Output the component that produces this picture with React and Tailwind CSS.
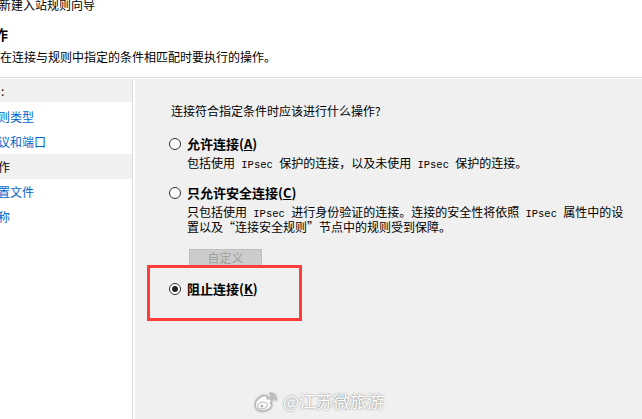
import React from 'react'

const cjk = "font-['Noto_Sans_CJK_SC','Noto_Sans',sans-serif]"

// 单选框
function Radio({ checked }) {
  return (
    <span className="w-[12px] h-[12px] rounded-full border border-[#333333] bg-white flex items-center justify-center shrink-0">
      {checked && <span className="w-[6px] h-[6px] rounded-full bg-[#222222]" />}
    </span>
  )
}

function Option({ label, hotkey, checked }) {
  return (
    <div className="flex items-center h-4 gap-[6px]">
      <Radio checked={checked} />
      <span className="text-[13px] leading-4 font-bold text-black">
        {label}(<span className="underline">{hotkey}</span>)
      </span>
    </div>
  )
}

// IPsec 等英文按等宽显示
function Mono({ children }) {
  return <span className="font-['Liberation_Mono',monospace] text-[10.5px] leading-none">{children}</span>
}

function WeiboLogo() {
  return (
    <svg width="26" height="21" viewBox="0 0 26 21" className="drop-shadow-[0_0_1px_rgba(0,0,0,0.45)]">
      <path d="M3 11c2-4 7-7 10-6 2 1 1 3 1 3s3-1 4 1c1 2-1 3-1 3 2 1 2 3 0 5-3 3-10 4-13 1-2-2-2-4-1-7z" fill="#ffffff" stroke="#b8b8b8" strokeWidth="1.2" />
      <ellipse cx="9.5" cy="14.5" rx="5" ry="3.4" transform="rotate(-12 9.5 14.5)" fill="#fff" stroke="#b8b8b8" strokeWidth="1" />
      <circle cx="8.8" cy="15" r="1.6" fill="#b8b8b8" />
      <path d="M17 2.5c3.5 0 6.5 3 6 6.5" fill="none" stroke="#b8b8b8" strokeWidth="1.4" strokeLinecap="round" />
      <path d="M17.5 5.5c1.6 0 2.8 1.3 2.6 2.9" fill="none" stroke="#b8b8b8" strokeWidth="1.2" strokeLinecap="round" />
    </svg>
  )
}

export default function App() {
  const steps = [
    { text: '则类型', active: false },
    { text: '议和端口', active: false },
    { text: '作', active: true },
    { text: '置文件', active: false },
    { text: '称', active: false },
  ]

  return (
    <div className={`relative w-[642px] h-[419px] overflow-hidden bg-white flex flex-col ${cjk}`}>
      {/* 顶部标题区 */}
      <div className="h-[78px] shrink-0 border-b border-[#dcdcdc] flex flex-col">
        <div className="-mt-[2px] -ml-[1px] text-[12px] leading-[14px] text-black">新建入站规则向导</div>
        <div className="mt-[12px] -ml-[6px] text-[14px] leading-[20px] font-bold text-black">作</div>
        <div className="mt-[5px] text-[12px] leading-4 text-black">在连接与规则中指定的条件相匹配时要执行的操作。</div>
      </div>

      <div className="flex flex-1 mt-[1px]">
        {/* 左侧步骤 */}
        <div className="w-[133px] shrink-0 border-r border-[#dcdcdc] bg-white flex flex-col">
          <div className="h-[23px] bg-[#f0f0f0] flex items-center pl-[1px] text-[12px] text-black">:</div>
          <div className="mt-[2px] flex flex-col">
            {steps.map((s) => (
              <div
                key={s.text}
                className={`h-[25px] flex items-center text-[12px] ${s.active ? 'bg-[#f0f0f0] text-black' : 'text-[#0066cc]'}`}
              >
                <span className="-ml-[2px]">{s.text}</span>
              </div>
            ))}
          </div>
        </div>

        {/* 右侧内容 */}
        <div className="relative flex-1 bg-[#f0f0f0] border-l-2 border-white pl-[34px] pt-[24px] flex flex-col">
          <div className="pl-[2px] text-[12px] leading-4 text-black">连接符合指定条件时应该进行什么操作?</div>

          <div className="mt-[17px]">
            <Option label="允许连接" hotkey="A" />
          </div>
          <div className="mt-[3px] pl-[18px] text-[12px] leading-4 text-black whitespace-nowrap">
            包括使用<Mono> IPsec </Mono>保护的连接，以及未使用<Mono> IPsec </Mono>保护的连接。
          </div>

          <div className="mt-[14px]">
            <Option label="只允许安全连接" hotkey="C" />
          </div>
          <div className="mt-[4px] pl-[18px] text-[12px] leading-[13px] text-black whitespace-nowrap">
            只包括使用<Mono> IPsec </Mono>进行身份验证的连接。连接的安全性将依照<Mono> IPsec </Mono>属性中的设
            <br />
            置以及“连接安全规则”节点中的规则受到保障。
          </div>

          <button
            disabled
            className="mt-[16px] ml-[20px] w-[73px] h-[19px] bg-[#cccccc] border border-[#bfbfbf] text-[12px] leading-none text-[#a0a0a0] flex items-center justify-center"
          >
            自定义
          </button>

          <div className="mt-[13px]">
            <Option label="阻止连接" hotkey="K" checked />
          </div>

          {/* 红色标注框 */}
          <div className="absolute left-[12px] top-[186px] w-[155px] h-[56px] border-[3px] border-[#ff3b3b]" />
        </div>
      </div>

      {/* 水印 */}
      <div className="absolute left-[253px] top-[390px] flex items-center gap-[4px]">
        <WeiboLogo />
        <span className="text-[17px] leading-[22px] text-white [text-shadow:0_0_2px_rgba(0,0,0,0.55)]">@江苏微旅游</span>
      </div>
    </div>
  )
}
